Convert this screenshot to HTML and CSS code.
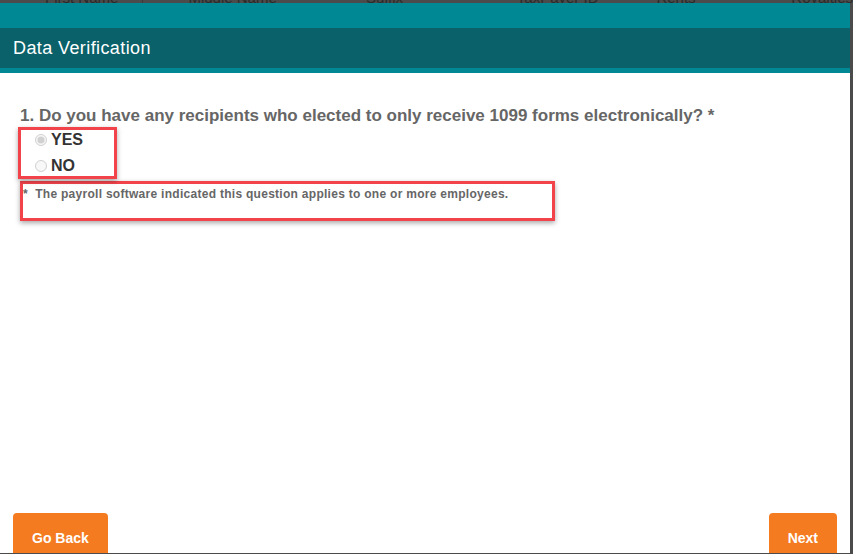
FILE: index.html
```html
<!DOCTYPE html>
<html lang="en">
<head>
    <meta charset="UTF-8">
    <meta name="viewport" content="width=device-width, initial-scale=1.0">
    <title>Data Verification</title>
    <link rel="stylesheet" href="styles.css">
</head>
<body>
    <div class="backdrop">
        <div class="grid-head">
            <span class="col c1">First Name</span>
            <span class="col c2">Middle Name</span>
            <span class="col c3">Suffix</span>
            <span class="col c4">TaxPayer ID No</span>
            <span class="col c5">Rents</span>
            <span class="col c6">Royalties</span>
        </div>
    </div>

    <div class="modal">
        <div class="modal-top"></div>
        <div class="modal-header">Data Verification</div>

        <div class="modal-body">
            <p class="question">1. Do you have any recipients who elected to only receive 1099 forms electronically? *</p>
            <div class="options mark">
                <label class="option"><input type="radio" name="q1" value="yes" checked disabled> YES</label>
                <label class="option"><input type="radio" name="q1" value="no" disabled> NO</label>
            </div>
            <div class="note mark">*&nbsp; The payroll software indicated this question applies to one or more employees.</div>
        </div>

        <div class="modal-footer">
            <button class="btn">Go Back</button>
            <button class="btn">Next</button>
        </div>
    </div>
</body>
</html>
```

FILE: styles.css
```css
body {
    margin: 0;
    background-color: #4b4b4b;
    font-family: "Liberation Sans", Arial, sans-serif;
    height: 554px;
    overflow: hidden;
}
.backdrop {
    height: 3px;
    overflow: hidden;
}
.grid-head {
    display: flex;
    margin-top: -11px;
    font-size: 15px;
    color: #2a2a2a;
    height: 16px;
}
.col {
    padding-left: 45px;
}
.c1 { width: 103px; border-right: 1px solid #3a3a3a; }
.c2 { width: 140px; }
.c3 { width: 112px; }
.c4 { width: 100px; }
.c5 { width: 95px; }
.modal {
    width: 850px;
    height: 550px;
    background-color: white;
    display: flex;
    flex-direction: column;
    overflow: hidden;
}
.modal-top {
    height: 25px;
    background-color: #008995;
}
.modal-header {
    height: 40px;
    background-color: #0a6169;
    border-bottom: 5px solid #008995;
    color: white;
    font-size: 18px;
    letter-spacing: 0.4px;
    display: flex;
    align-items: center;
    padding-left: 13px;
}
.modal-body {
    flex: 1;
    padding: 33px 20px 0 18px;
}
.question {
    margin: 0 0 1px 2px;
    font-size: 17px;
    font-weight: bold;
    color: #666;
}
.mark {
    border: 3px solid #f2434b;
    box-shadow: 0 2px 5px rgba(0, 0, 0, 0.35);
}
.options {
    display: inline-flex;
    flex-direction: column;
    width: 93px;
    height: 46px;
    padding: 0;
}
.option {
    display: flex;
    align-items: center;
    flex-shrink: 0;
    height: 26px;
    padding-left: 13px;
    font-size: 16px;
    font-weight: bold;
    color: #333;
}
.option:first-child {
    margin-top: -3px;
}
.option input {
    margin: 0 4px 0 1px;
    width: 12px;
    height: 12px;
}
.note {
    margin: 2px 0 0 2px;
    width: 535px;
    height: 40px;
    box-sizing: border-box;
    padding: 3px 0 0 0;
    font-size: 12px;
    letter-spacing: 0.28px;
    font-weight: bold;
    color: #666;
}
.modal-footer {
    height: 40px;
    display: flex;
    justify-content: space-between;
    align-items: flex-start;
    padding: 0 13px;
}
.btn {
    height: 50px;
    padding: 0 19px;
    border: none;
    border-radius: 4px;
    background-color: #f47b20;
    color: white;
    font-family: "Liberation Sans", Arial, sans-serif;
    font-size: 14px;
    font-weight: bold;
    flex-shrink: 0;
}
```
